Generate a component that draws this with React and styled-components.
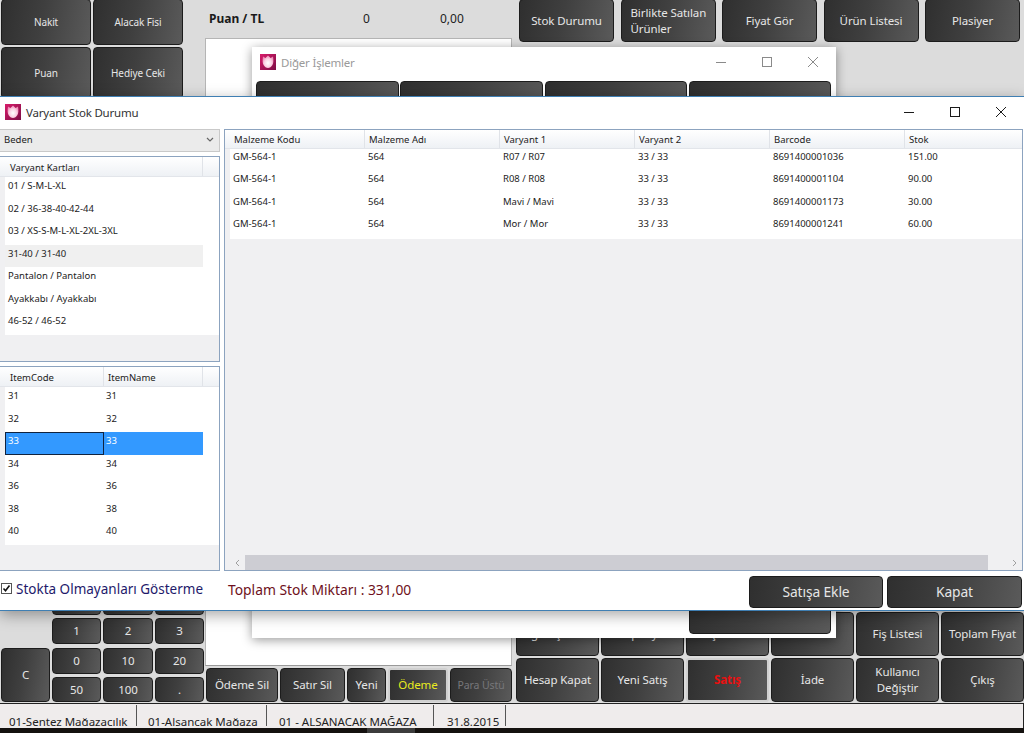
import React from "react";
import styled, { createGlobalStyle, css } from "styled-components";

const Global = createGlobalStyle`
  html, body { margin: 0; padding: 0; background: #dcdcdc; }
  * { box-sizing: border-box; }
  body { font-family: "Noto Sans", "Open Sans", "Liberation Sans", sans-serif; }
`;

const Desktop = styled.div`
  position: relative;
  width: 1024px;
  height: 733px;
  overflow: hidden;
  background: #dcdcdc;
  display: flex;
  flex-direction: column;
`;

const Content = styled.div`
  height: 703px;
  flex: none;
  display: flex;
  overflow: hidden;
`;

const DarkButton = styled.div`
  display: flex;
  align-items: center;
  justify-content: ${(p) => (p.$left ? "flex-start" : "center")};
  padding: ${(p) => (p.$left ? "0 5px 0 9px" : "0 2px")};
  text-align: ${(p) => (p.$left ? "left" : "center")};
  color: ${(p) => p.$color || "#e6e6e6"};
  font-size: ${(p) => p.$size || 11.5}px;
  font-weight: ${(p) => (p.$bold ? 700 : 400)};
  line-height: 16px;
  letter-spacing: -0.1px;
  border-radius: 4px;
  border: 1px solid #1c1c1c;
  background: linear-gradient(100deg, #2f2f2f 0%, #3f3f3f 45%, #5a5a5a 100%);
  ${(p) => p.$rows && css`grid-row: span ${p.$rows};`}
  ${(p) => p.$col && css`grid-column: ${p.$col};`}
  ${(p) => p.$soft && css`
    border: 2px solid #d0d0d0;
    border-radius: 3px;
  `}
`;

const LeftCol = styled.div`
  width: 205px;
  flex: none;
  display: flex;
  flex-direction: column;
  justify-content: space-between;
  padding-left: 1px;
`;

const PayGrid = styled.div`
  display: grid;
  grid-template-columns: 90px 90px;
  grid-template-rows: 46px 52px;
  gap: 2px;
  margin-top: -1px;
`;

const Keypad = styled.div`
  display: grid;
  grid-template-columns: 49px 49px 50px 49px;
  grid-template-rows: 26px 26px 26px 25px;
  column-gap: 2px;
  row-gap: 3.5px;
  padding-bottom: 1px;
`;

const KeySlot = styled.div``;

const CenterCol = styled.div`
  width: 307px;
  flex: none;
  display: flex;
  flex-direction: column;
`;

const PuanRow = styled.div`
  height: 38px;
  flex: none;
  display: grid;
  grid-template-columns: 154px 77px 1fr;
  padding: 0 0 2px 4px;
  align-items: center;
  font-size: 12px;
  color: #222;
`;

const PuanLabel = styled.span`
  font-weight: 700;
  color: #1a1a1a;
`;

const WhitePanel = styled.div`
  flex: 1;
  background: #fff;
  border: 1px solid #b5b5b5;
  border-bottom-color: #999;
`;

const ActionRow = styled.div`
  height: 37px;
  flex: none;
  display: flex;
  align-items: stretch;
  gap: 2px;
  padding: 2px 0 1px 1px;
`;

const Action = styled(DarkButton)`
  width: ${(p) => p.$w}px;
  flex: none;
`;

const RightCol = styled.div`
  flex: 1;
  display: flex;
  flex-direction: column;
  justify-content: space-between;
  padding-left: 4px;
`;

const TopTools = styled.div`
  display: grid;
  grid-template-columns: repeat(5, 95px);
  grid-template-rows: 43px;
  column-gap: 6.5px;
  height: 43px;
  margin-top: -1px;
  padding-left: 3px;
`;

const FuncGrid = styled.div`
  display: grid;
  grid-template-columns: repeat(6, 83px);
  column-gap: 2px;
  grid-template-rows: 44px 44px;
  row-gap: 2px;
  padding-bottom: 1px;
`;

const StatusBar = styled.div`
  height: 25px;
  flex: none;
  display: flex;
  background: #efecec;
  border-top: 1px solid #222;
  border-right: 1px solid #222;
  overflow: hidden;
  font-size: 11.5px;
  color: #222;
`;

const StatusCell = styled.div`
  height: 21px;
  margin-top: 1px;
  flex: none;
  width: ${(p) => p.$w}px;
  padding: 9px 0 0 ${(p) => p.$pad}px;
  border-right: 1px solid #555;
  white-space: nowrap;
  overflow: hidden;
`;

const Taskbar = styled.div`
  height: 5px;
  flex: none;
  display: flex;
  background: #14110f;
  padding-left: 367px;
`;

const TaskPatch = styled.div`
  width: 48px;
  background: #3c3c3c;
`;

const Win = styled.div`
  position: absolute;
  left: ${(p) => p.$x}px;
  top: ${(p) => p.$y}px;
  width: ${(p) => p.$w}px;
  height: ${(p) => p.$h}px;
  background: #fff;
  display: flex;
  flex-direction: column;
`;

const BackWin = styled(Win)`
  box-shadow: 0 2px 10px rgba(0, 0, 0, 0.4);
`;

const MainWin = styled(Win)`
  border-top: 1px solid #3f7fb3;
  border-bottom: 1px solid #3f7fb3;
  box-shadow: 0 4px 14px rgba(0, 0, 0, 0.35);
`;

const TitleBar = styled.div`
  height: ${(p) => p.$h}px;
  flex: none;
  display: flex;
  align-items: center;
  gap: 5px;
  padding: 0 0 ${(p) => p.$bottom}px ${(p) => p.$pad}px;
  color: ${(p) => p.$color};
  font-size: 11.5px;
`;

const TitleText = styled.span`
  flex: 1;
  letter-spacing: -0.2px;
`;

const Controls = styled.div`
  display: flex;
  align-items: center;
  width: 138px;
  flex: none;
`;

const Control = styled.div`
  width: 46px;
  display: flex;
  justify-content: center;
`;

const Glyph = ({ kind, color }) => (
  <svg width="12" height="12" viewBox="0 0 12 12" fill="none" stroke={color} strokeWidth="1">
    {kind === "min" && <path d="M1 6.5h10" />}
    {kind === "max" && <rect x="1.5" y="1.5" width="9" height="9" />}
    {kind === "close" && <path d="M1 1l10 10M11 1L1 11" />}
  </svg>
);

const WinControls = ({ color }) => (
  <Controls>
    <Control><Glyph kind="min" color={color} /></Control>
    <Control><Glyph kind="max" color={color} /></Control>
    <Control><Glyph kind="close" color={color} /></Control>
  </Controls>
);

const Tulip = ({ id }) => (
  <svg width="16" height="16" viewBox="0 0 16 16">
    <defs>
      <linearGradient id={id} x1="0" y1="0" x2="1" y2="1">
        <stop offset="0" stopColor="#d81b6a" />
        <stop offset="1" stopColor="#7c0d45" />
      </linearGradient>
      <radialGradient id={id + "p"} cx="0.5" cy="0.6" r="0.6">
        <stop offset="0" stopColor="#ffffff" />
        <stop offset="0.55" stopColor="#fbd3e4" />
        <stop offset="1" stopColor="#ee86b4" />
      </radialGradient>
    </defs>
    <rect width="16" height="16" fill={`url(#${id})`} />
    <path d="M3 2.4l2.4 1.6L8 1.6l2.6 2.4L13 2.4c.7 4 .5 6.8-.7 8.8C11.4 12.8 9.8 14 8 14s-3.4-1.2-4.3-2.8C2.5 9.2 2.3 6.4 3 2.4z" fill={`url(#${id}p)`} />
  </svg>
);

const BackButtons = styled.div`
  flex: 1;
  display: flex;
  flex-direction: column;
  justify-content: space-between;
  padding: 0 4px 4px;
`;

const BackRow = styled.div`
  display: grid;
  grid-template-columns: repeat(4, 142.5px);
  column-gap: 1.75px;
  height: ${(p) => p.$h}px;
`;

const Body = styled.div`
  height: 442px;
  flex: none;
  display: flex;
  gap: 4px;
  padding-right: 1px;
`;

const Side = styled.div`
  width: 221px;
  margin-left: -1px;
  flex: none;
  display: flex;
  flex-direction: column;
  gap: 4px;
`;

const Combo = styled.div`
  height: 23px;
  flex: none;
  display: flex;
  align-items: center;
  justify-content: space-between;
  padding: 0 5px 2px 4px;
  font-size: 9.5px;
  color: #222;
  background: #ebebeb;
  border: 1px solid #c9c9c9;
`;

const Grid = styled.div`
  flex: ${(p) => (p.$fill ? 1 : "none")};
  height: ${(p) => (p.$h ? p.$h + "px" : "auto")};
  display: flex;
  flex-direction: column;
  border: 1px solid #8ca3bf;
  background: #f0f0f2;
  overflow: hidden;
  font-size: 9.5px;
  color: #222;
`;

const HeadRow = styled.div`
  height: ${(p) => p.$h}px;
  flex: none;
  display: flex;
  background: linear-gradient(#ffffff, #eef1f5);
  border-bottom: 1px solid #e2e5ea;
  padding-left: ${(p) => p.$ind}px;
`;

const HeadCell = styled.div`
  width: ${(p) => p.$w}px;
  flex: none;
  display: flex;
  align-items: center;
  padding: ${(p) => p.$top || 0}px 0 0 ${(p) => p.$pad}px;
  border-right: 1px solid #e0e3e8;
  white-space: nowrap;
`;

const Rows = styled.div`
  flex: none;
  background: #fff;
  margin-left: ${(p) => p.$ind}px;
`;

const DataRow = styled.div`
  height: 22.5px;
  display: flex;
  background: ${(p) => (p.$hover ? "#f0f0f0" : "transparent")};
  width: ${(p) => (p.$w ? p.$w + "px" : "auto")};
`;

const DataCell = styled.div`
  width: ${(p) => p.$w}px;
  flex: none;
  padding: ${(p) => p.$top}px 0 0 ${(p) => p.$pad}px;
  line-height: 14px;
  white-space: nowrap;
  ${(p) => p.$sel && css`
    background: #3399ff;
    color: #fff;
  `}
  ${(p) => p.$focus && css`
    border: 1px solid #10233f;
    padding: ${p.$top - 1}px 0 0 ${p.$pad - 1}px;
  `}
`;

const Filler = styled.div`
  flex: 1;
`;

const ScrollBar = styled.div`
  height: 15px;
  flex: none;
  display: flex;
  align-items: center;
  padding-left: 5px;
`;

const ScrollArrow = styled.div`
  width: 15px;
  flex: none;
  display: flex;
  justify-content: center;
`;

const ScrollThumb = styled.div`
  width: 743px;
  height: 15px;
  background: #cdcdd3;
`;

const ScrollTrack = styled.div`
  flex: 1;
  height: 15px;
`;

const Footer = styled.div`
  flex: 1;
  display: flex;
  align-items: center;
`;

const CheckLabel = styled.label`
  display: flex;
  align-items: center;
  gap: 4px;
  width: 228px;
  padding: 0 0 4px 1px;
  font-size: 13.5px;
  color: #1e1a6b;
  white-space: nowrap;
`;

const CheckBox = styled.span`
  width: 11px;
  height: 11px;
  flex: none;
  display: flex;
  background: #fff;
  border: 1px solid #555;
`;

const Total = styled.span`
  flex: 1;
  padding-bottom: 2px;
  font-size: 13.85px;
  color: #6e1020;
  white-space: nowrap;
`;

const FootBtn = styled(DarkButton)`
  width: ${(p) => p.$w}px;
  height: 32px;
  flex: none;
  font-size: 13.8px;
  margin: 2px ${(p) => p.$mr}px 0 0;
  padding-top: 1px;
`;

const cols = [135, 135, 135, 135, 135, 118];
const heads = ["Malzeme Kodu", "Malzeme Adı", "Varyant 1", "Varyant 2", "Barcode", "Stok"];
const stock = [
  ["GM-564-1", "564", "R07 / R07", "33 / 33", "8691400001036", "151.00"],
  ["GM-564-1", "564", "R08 / R08", "33 / 33", "8691400001104", "90.00"],
  ["GM-564-1", "564", "Mavi / Mavi", "33 / 33", "8691400001173", "30.00"],
  ["GM-564-1", "564", "Mor / Mor", "33 / 33", "8691400001241", "60.00"],
];
const cards = [
  "01 / S-M-L-XL",
  "02 / 36-38-40-42-44",
  "03 / XS-S-M-L-XL-2XL-3XL",
  "31-40 / 31-40",
  "Pantalon / Pantalon",
  "Ayakkabı / Ayakkabı",
  "46-52 / 46-52",
];
const items = ["31", "32", "33", "34", "36", "38", "40"];

export default function App() {
  return (
    <Desktop>
      <Global />
      <Content>
        <LeftCol>
          <PayGrid>
            <DarkButton $size={10}>Nakit</DarkButton>
            <DarkButton $size={10}>Alacak Fisi</DarkButton>
            <DarkButton $size={10}>Puan</DarkButton>
            <DarkButton $size={10}>Hediye Ceki</DarkButton>
          </PayGrid>
          <Keypad>
            <KeySlot />
            <DarkButton />
            <DarkButton />
            <DarkButton />
            <KeySlot />
            <DarkButton>1</DarkButton>
            <DarkButton>2</DarkButton>
            <DarkButton>3</DarkButton>
            <DarkButton $rows={2}>C</DarkButton>
            <DarkButton>0</DarkButton>
            <DarkButton>10</DarkButton>
            <DarkButton>20</DarkButton>
            <DarkButton>50</DarkButton>
            <DarkButton>100</DarkButton>
            <DarkButton>.</DarkButton>
          </Keypad>
        </LeftCol>
        <CenterCol>
          <PuanRow>
            <PuanLabel>Puan / TL</PuanLabel>
            <span>0</span>
            <span>0,00</span>
          </PuanRow>
          <WhitePanel />
          <ActionRow>
            <Action $w={72}>Ödeme Sil</Action>
            <Action $w={65}>Satır Sil</Action>
            <Action $w={39}>Yeni</Action>
            <Action $w={60} $soft $color="#eaea20">Ödeme</Action>
            <Action $w={62} $color="#77777a" $size={10.5}>Para Üstü</Action>
          </ActionRow>
        </CenterCol>
        <RightCol>
          <TopTools>
            <DarkButton>Stok Durumu</DarkButton>
            <DarkButton $left>Birlikte Satılan Ürünler</DarkButton>
            <DarkButton>Fiyat Gör</DarkButton>
            <DarkButton>Ürün Listesi</DarkButton>
            <DarkButton>Plasiyer</DarkButton>
          </TopTools>
          <FuncGrid>
            <DarkButton>Diğer İşlemler</DarkButton>
            <DarkButton>Kampanyalar</DarkButton>
            <DarkButton>Açıklama</DarkButton>
            <DarkButton>Not</DarkButton>
            <DarkButton>Fiş Listesi</DarkButton>
            <DarkButton>Toplam Fiyat</DarkButton>
            <DarkButton>Hesap Kapat</DarkButton>
            <DarkButton>Yeni Satış</DarkButton>
            <DarkButton $soft $bold $color="#e81010">Satış</DarkButton>
            <DarkButton>İade</DarkButton>
            <DarkButton>Kullanıcı Değiştir</DarkButton>
            <DarkButton>Çıkış</DarkButton>
          </FuncGrid>
        </RightCol>
      </Content>
      <StatusBar>
        <StatusCell $w={137} $pad={9}>01-Sentez Mağazacılık</StatusCell>
        <StatusCell $w={130} $pad={11}>01-Alsancak Mağaza</StatusCell>
        <StatusCell $w={167} $pad={12}>01 - ALSANACAK MAĞAZA</StatusCell>
        <StatusCell $w={72} $pad={13}>31.8.2015</StatusCell>
      </StatusBar>
      <Taskbar><TaskPatch /></Taskbar>

      <BackWin $x={252} $y={47} $w={584} $h={591}>
        <TitleBar $h={34} $bottom={4} $pad={8} $color="#9a9a9a">
          <Tulip id="t1" />
          <TitleText>Diğer İşlemler</TitleText>
          <WinControls color="#8a8a8a" />
        </TitleBar>
        <BackButtons>
          <BackRow $h={60}>
            <DarkButton />
            <DarkButton />
            <DarkButton />
            <DarkButton />
          </BackRow>
          <BackRow $h={60}>
            <DarkButton $col={4} />
          </BackRow>
        </BackButtons>
      </BackWin>

      <MainWin $x={0} $y={96} $w={1024} $h={515}>
        <TitleBar $h={32} $bottom={2} $pad={5} $color="#333">
          <Tulip id="t2" />
          <TitleText>Varyant Stok Durumu</TitleText>
          <WinControls color="#1a1a1a" />
        </TitleBar>
        <Body>
          <Side>
            <Combo>
              Beden
              <svg width="8" height="6" viewBox="0 0 8 6" fill="none" stroke="#666" strokeWidth="1.2">
                <path d="M1 1l3 3 3-3" />
              </svg>
            </Combo>
            <Grid $h={206}>
              <HeadRow $h={20} $ind={5}>
                <HeadCell $w={198} $pad={5} $top={2}>Varyant Kartları</HeadCell>
              </HeadRow>
              <Rows $ind={5}>
                {cards.map((c, i) => (
                  <DataRow key={c} $hover={i === 3} $w={i === 3 ? 198 : 0}>
                    <DataCell $w={198} $pad={3} $top={2}>{c}</DataCell>
                  </DataRow>
                ))}
              </Rows>
            </Grid>
            <Grid $fill>
              <HeadRow $h={20} $ind={5}>
                <HeadCell $w={99} $pad={5} $top={2}>ItemCode</HeadCell>
                <HeadCell $w={99} $pad={4} $top={2}>ItemName</HeadCell>
              </HeadRow>
              <Rows $ind={5}>
                {items.map((c) => (
                  <DataRow key={c}>
                    <DataCell $w={99} $pad={3} $top={2} $sel={c === "33"} $focus={c === "33"}>{c}</DataCell>
                    <DataCell $w={99} $pad={2} $top={2} $sel={c === "33"}>{c}</DataCell>
                  </DataRow>
                ))}
              </Rows>
            </Grid>
          </Side>
          <Grid $fill>
            <HeadRow $h={19} $ind={5}>
              {heads.map((h, i) => (
                <HeadCell key={h} $w={cols[i]} $pad={4}>{h}</HeadCell>
              ))}
            </HeadRow>
            <Rows $ind={5}>
              {stock.map((r, ri) => (
                <DataRow key={ri}>
                  {r.map((c, i) => (
                    <DataCell key={i} $w={cols[i]} $pad={3} $top={0.5}>{c}</DataCell>
                  ))}
                </DataRow>
              ))}
            </Rows>
            <Filler />
            <ScrollBar>
              <ScrollArrow>
                <svg width="5" height="8" viewBox="0 0 5 8" fill="none" stroke="#a0a0a0"><path d="M4 1L1 4l3 3" /></svg>
              </ScrollArrow>
              <ScrollThumb />
              <ScrollTrack />
              <ScrollArrow>
                <svg width="5" height="8" viewBox="0 0 5 8" fill="none" stroke="#a0a0a0"><path d="M1 1l3 3-3 3" /></svg>
              </ScrollArrow>
            </ScrollBar>
          </Grid>
        </Body>
        <Footer>
          <CheckLabel>
            <CheckBox>
              <svg width="9" height="9" viewBox="0 0 9 9" fill="none" stroke="#111" strokeWidth="1.6">
                <path d="M1.5 4.5l2 2.2L7.5 1.5" />
              </svg>
            </CheckBox>
            Stokta Olmayanları Gösterme
          </CheckLabel>
          <Total>Toplam Stok Miktarı : 331,00</Total>
          <FootBtn $w={134} $mr={4}>Satışa Ekle</FootBtn>
          <FootBtn $w={135} $mr={2}>Kapat</FootBtn>
        </Footer>
      </MainWin>
    </Desktop>
  );
}
